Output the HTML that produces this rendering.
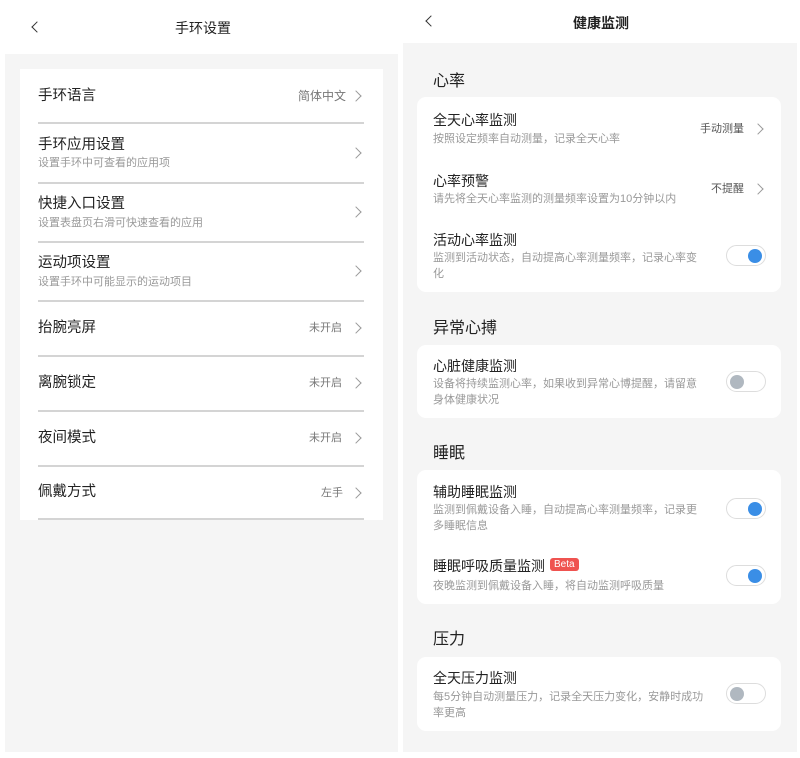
<!DOCTYPE html><html><head><meta charset="utf-8"><style>
*{margin:0;padding:0;box-sizing:border-box}
body{width:800px;height:758px;background:#fff;font-family:"Liberation Sans","Noto Sans CJK SC",sans-serif;position:relative;overflow:hidden;color:#222}
.abs{position:absolute}
.gray{background:#f5f5f5}
.t{position:absolute;white-space:nowrap}
.line{position:absolute;left:38px;width:326px;height:2px;background:#d4d4d4}
.chev{position:absolute;width:8px;height:8px;border-right:1.3px solid #999;border-top:1.3px solid #999;transform:rotate(45deg)}
.card{position:absolute;left:417px;width:364px;background:#fff;border-radius:9px}
.tg{position:absolute;left:726px;width:40px;height:21px;border:1px solid #ddd;border-radius:11px;background:#fff}
.tg i{position:absolute;top:2.5px;width:14px;height:14px;border-radius:50%}
.on i{right:3px;background:#3a8ee6}.off i{left:3px;background:#b0b8c0}
.h{font-size:16px;color:#222}
.l{font-size:14.5px;color:#222;line-height:20px}
.s{font-size:11px;color:#999;line-height:16px}
.m{font-size:14px;color:#222}
</style></head><body>
<div class="abs gray" style="left:5px;top:54px;width:393px;height:698px"></div>
<div class="abs gray" style="left:403px;top:43px;width:394px;height:709px"></div>
<div class="chev" style="left:33px;top:23px;transform:rotate(-135deg);border-color:#333"></div>
<div class="t" style="left:175px;top:18px;font-size:14px">手环设置</div>
<div class="abs" style="left:20px;top:69px;width:363px;height:451px;background:#fff"></div>
<div class="t l" style="left:38px;top:86px">手环语言</div><div class="t s" style="left:298px;top:88px;font-size:12px;color:#777">简体中文</div><div class="chev" style="left:352px;top:92px"></div>
<div class="line" style="top:122px"></div>
<div class="t l" style="left:38px;top:135px">手环应用设置</div><div class="t s" style="left:38px;top:155px">设置手环中可查看的应用项</div><div class="chev" style="left:352px;top:149px"></div>
<div class="line" style="top:182px"></div>
<div class="t l" style="left:38px;top:194px">快捷入口设置</div><div class="t s" style="left:38px;top:215px">设置表盘页右滑可快速查看的应用</div><div class="chev" style="left:352px;top:208px"></div>
<div class="line" style="top:241px"></div>
<div class="t l" style="left:38px;top:253px">运动项设置</div><div class="t s" style="left:38px;top:274px">设置手环中可能显示的运动项目</div><div class="chev" style="left:352px;top:267px"></div>
<div class="line" style="top:300px"></div>
<div class="t l" style="left:38px;top:318px">抬腕亮屏</div><div class="t s" style="left:309px;top:320px;color:#777">未开启</div><div class="chev" style="left:352px;top:324px"></div>
<div class="line" style="top:355px"></div>
<div class="t l" style="left:38px;top:373px">离腕锁定</div><div class="t s" style="left:309px;top:375px;color:#777">未开启</div><div class="chev" style="left:352px;top:379px"></div>
<div class="line" style="top:410px"></div>
<div class="t l" style="left:38px;top:428px">夜间模式</div><div class="t s" style="left:309px;top:430px;color:#777">未开启</div><div class="chev" style="left:352px;top:434px"></div>
<div class="line" style="top:465px"></div>
<div class="t l" style="left:38px;top:482px">佩戴方式</div><div class="t s" style="left:321px;top:485px;color:#777">左手</div><div class="chev" style="left:352px;top:489px"></div>
<div class="line" style="top:518px"></div>

<div class="chev" style="left:427px;top:17px;transform:rotate(-135deg);border-color:#333"></div>
<div class="t" style="left:573px;top:13px;font-size:14px;font-weight:bold">健康监测</div>
<div class="t h" style="left:433px;top:67px">心率</div>
<div class="card" style="top:97px;height:195px"></div>
<div class="t m" style="left:433px;top:110px">全天心率监测</div><div class="t s" style="left:433px;top:131px">按照设定频率自动测量，记录全天心率</div><div class="t s" style="left:700px;top:121px;color:#555">手动测量</div><div class="chev" style="left:754px;top:125px"></div>
<div class="t m" style="left:433px;top:171px">心率预警</div><div class="t s" style="left:433px;top:191px">请先将全天心率监测的测量频率设置为10分钟以内</div><div class="t s" style="left:711px;top:181px;color:#555">不提醒</div><div class="chev" style="left:754px;top:185px"></div>
<div class="t m" style="left:433px;top:230px">活动心率监测</div><div class="t s" style="left:433px;top:250px">监测到活动状态，自动提高心率测量频率，记录心率变<br>化</div><div class="tg on" style="top:245px"><i></i></div>
<div class="t h" style="left:433px;top:314px">异常心搏</div>
<div class="card" style="top:345px;height:73px"></div>
<div class="t m" style="left:433px;top:356px">心脏健康监测</div><div class="t s" style="left:433px;top:376px">设备将持续监测心率，如果收到异常心博提醒，请留意<br>身体健康状况</div><div class="tg off" style="top:371px"><i></i></div>
<div class="t h" style="left:433px;top:439px">睡眠</div>
<div class="card" style="top:470px;height:134px"></div>
<div class="t m" style="left:433px;top:482px">辅助睡眠监测</div><div class="t s" style="left:433px;top:502px">监测到佩戴设备入睡，自动提高心率测量频率，记录更<br>多睡眠信息</div><div class="tg on" style="top:498px"><i></i></div>
<div class="t m" style="left:433px;top:556px">睡眠呼吸质量监测</div><div class="t" style="left:550px;top:558px;background:#ef5350;color:#fff;font-size:10px;padding:1px 4px;border-radius:3px">Beta</div><div class="t s" style="left:433px;top:578px">夜晚监测到佩戴设备入睡，将自动监测呼吸质量</div><div class="tg on" style="top:565px"><i></i></div>
<div class="t h" style="left:433px;top:625px">压力</div>
<div class="card" style="top:657px;height:74px"></div>
<div class="t m" style="left:433px;top:668px">全天压力监测</div><div class="t s" style="left:433px;top:689px">每5分钟自动测量压力，记录全天压力变化，安静时成功<br>率更高</div><div class="tg off" style="top:683px"><i></i></div>
</body></html>
